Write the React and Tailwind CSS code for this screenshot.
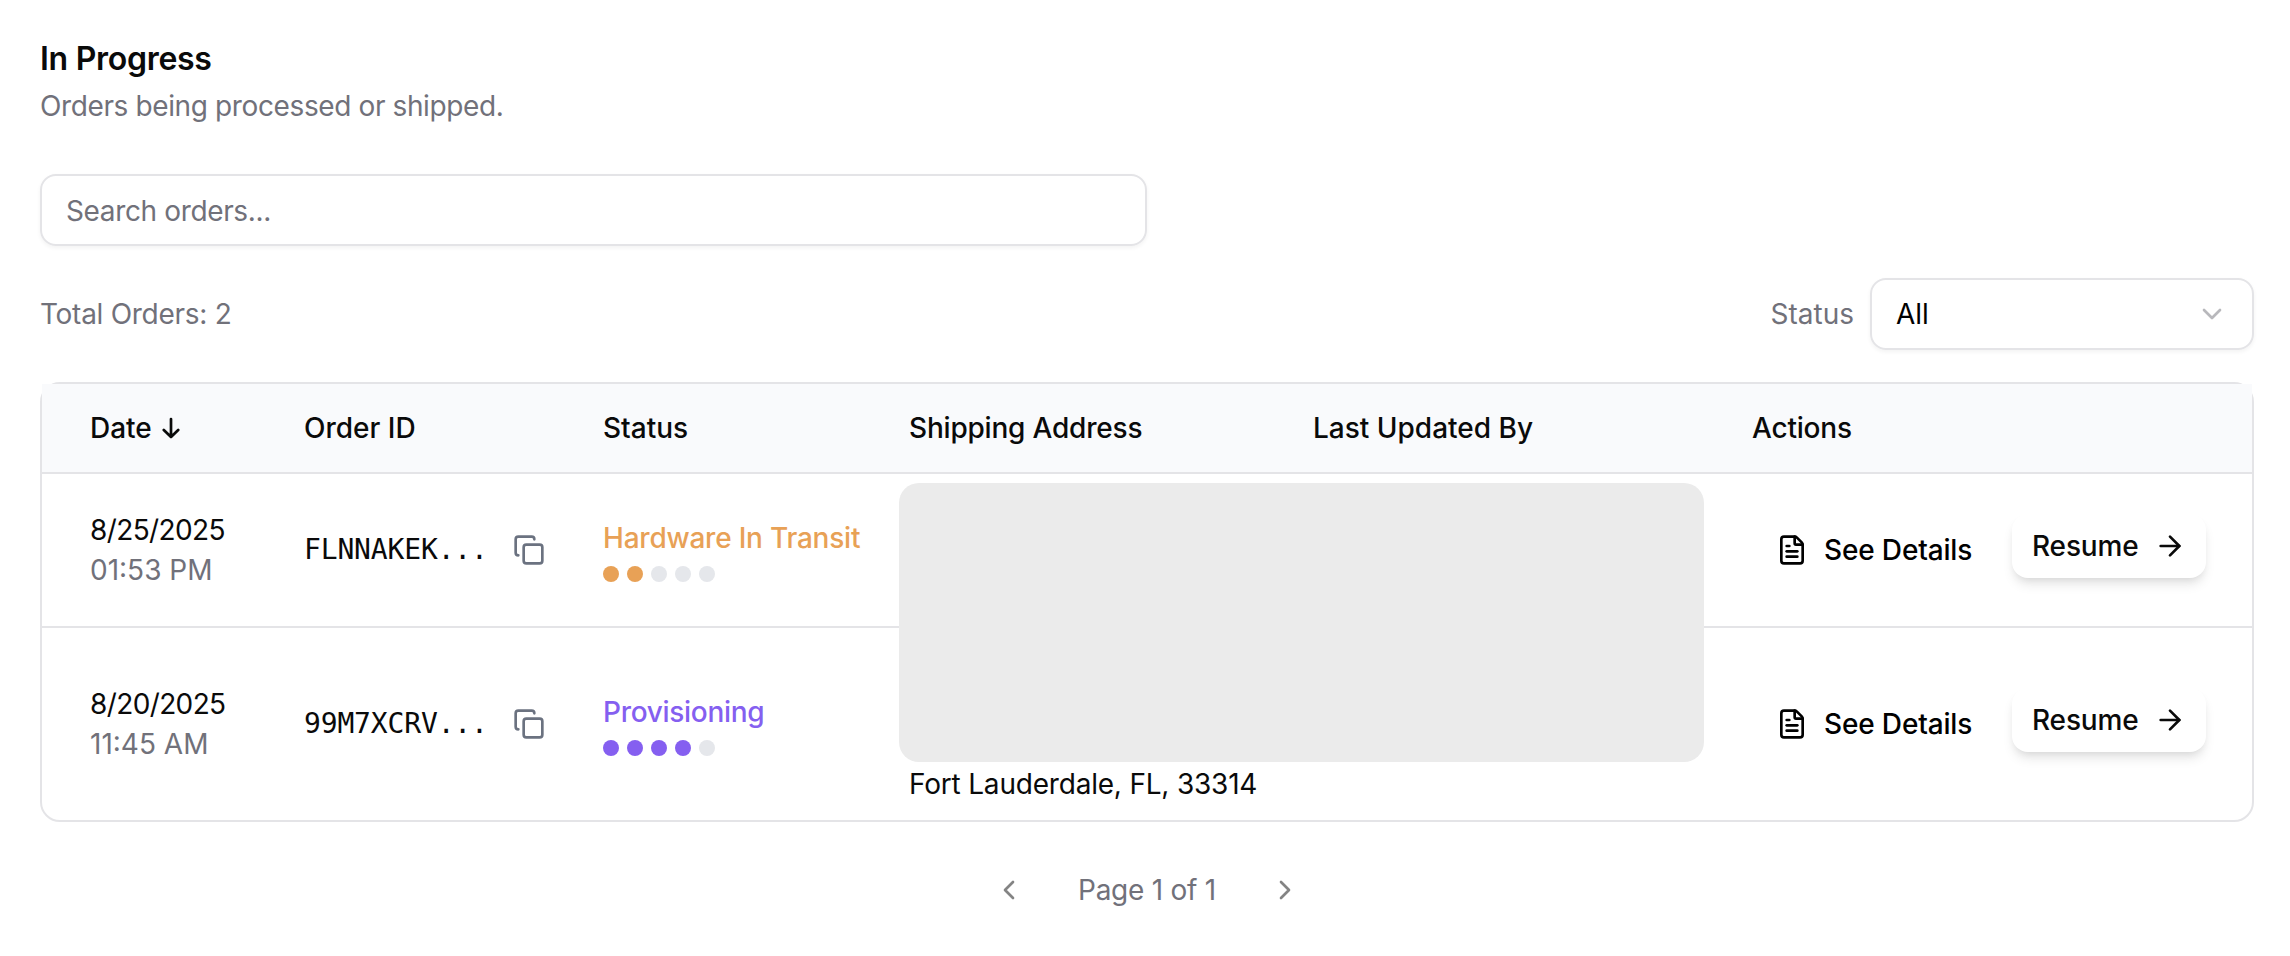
import { ArrowRight, ChevronDown, ChevronLeft, ChevronRight, Copy, FileText } from 'lucide-react';

const orders = [
  {
    date: '8/25/2025',
    time: '01:53 PM',
    id: 'FLNNAKEK...',
    status: 'Hardware In Transit',
    textClass: 'text-[#e8a156] tracking-[-0.22px]',
    dotClass: 'bg-[#e8a156]',
    step: 2,
    rowClass: 'h-[154px] border-b-2',
    city: '',
  },
  {
    date: '8/20/2025',
    time: '11:45 AM',
    id: '99M7XCRV...',
    status: 'Provisioning',
    textClass: 'text-[#855ff0] tracking-[-0.3px]',
    dotClass: 'bg-[#855ff0]',
    step: 4,
    rowClass: 'h-[192px]',
    city: 'Fort Lauderdale, FL, 33314',
  },
];

const columns = 'grid grid-cols-[214px_299px_306px_404px_439px_1fr] pl-12';

function SortArrow() {
  return (
    <svg width="18" height="22" viewBox="0 0 18 22" fill="none" stroke="currentColor" strokeWidth="2.7" strokeLinecap="round" strokeLinejoin="round">
      <path d="M9 2v18M1.8 13l7.2 7 7.2-7" />
    </svg>
  );
}

function OrderRow({ order }) {
  return (
    <div className={`${columns} ${order.rowClass} items-center border-[#e4e4e7]`}>
      <div>
        <div className="tracking-[-0.62px]">{order.date}</div>
        <div className="text-[#71717a]">{order.time}</div>
      </div>
      <div className="flex items-center">
        <span className="w-[209px] font-['DejaVu_Sans_Mono',monospace] tracking-[-0.15px]">{order.id}</span>
        <Copy size={32} className="text-[#6b7280]" />
      </div>
      <div className="flex flex-col gap-2">
        <div className={`font-medium ${order.textClass}`}>{order.status}</div>
        <div className="flex gap-2">
          {[0, 1, 2, 3, 4].map((i) => (
            <span key={i} className={`size-4 rounded-full ${i < order.step ? order.dotClass : 'bg-[#e5e7eb]'}`} />
          ))}
        </div>
      </div>
      <div className="self-end whitespace-nowrap pb-4 tracking-[-0.2px]">{order.city}</div>
      <div />
      <div className="flex items-center pl-6 font-medium tracking-[-0.15px]">
        <button className="flex items-center gap-4 text-black">
          <FileText size={32} />
          <span className="w-[148px] whitespace-nowrap text-left">See Details</span>
        </button>
        <button className="mb-2 ml-10 flex h-16 w-[194px] items-center justify-between rounded-2xl bg-white px-5 shadow-[0_8px_12px_-2px_rgba(0,0,0,0.10),0_4px_8px_-4px_rgba(0,0,0,0.10)]">
          Resume
          <ArrowRight size={32} />
        </button>
      </div>
    </div>
  );
}

export default function App() {
  return (
    <main className="h-[956px] w-[2290px] bg-white px-10 pt-9 font-['Inter',sans-serif] text-[28px] leading-10 text-[#0a0a0a]">
      <h1 className="h-12 text-[32px] font-semibold leading-[46px] tracking-[-0.28px]">In Progress</h1>
      <p className="pt-0.5 tracking-[-0.38px] text-[#71717a]">Orders being processed or shipped.</p>
      <input
        placeholder="Search orders..."
        className="mt-12 block h-[72px] w-[1107px] rounded-2xl border-2 border-[#e4e4e7] px-6 pt-0.5 tracking-[-0.36px] shadow-[0_2px_4px_rgba(0,0,0,0.05)] outline-none placeholder:text-[#71717a]"
      />
      <div className="mt-8 flex h-[72px] w-[2214px] items-center justify-between">
        <span className="tracking-[-0.28px] text-[#71717a]">Total Orders: 2</span>
        <div className="flex items-center">
          <span className="mr-4 text-[#71717a]">Status</span>
          <button className="flex h-[72px] w-[384px] items-center justify-between rounded-2xl border-2 border-[#e4e4e7] px-6 text-black shadow-[0_2px_4px_rgba(0,0,0,0.05)]">
            All
            <ChevronDown size={32} className="text-[#b8b8bc]" />
          </button>
        </div>
      </div>
      <section className="relative mt-8 w-[2214px] rounded-[20px] border-2 border-[#e4e4e7]">
        <div className={`${columns} h-[90px] items-center border-b-2 border-[#e4e4e7] bg-[#f9fafc] font-medium`}>
          <span className="flex items-center gap-2.5">
            Date
            <SortArrow />
          </span>
          <span>Order ID</span>
          <span>Status</span>
          <span className="tracking-[-0.2px]">Shipping Address</span>
          <span>Last Updated By</span>
          <span className="tracking-[-0.2px]">Actions</span>
        </div>
        {orders.map((order) => (
          <OrderRow key={order.id} order={order} />
        ))}
        <div className="absolute left-[857px] top-[99px] h-[279px] w-[805px] rounded-[20px] bg-[#ebebeb]" />
      </section>
      <nav className="mt-12 flex w-[2214px] items-center justify-center gap-[53px] text-[#71717a]">
        <ChevronLeft size={32} className="text-[#848484]" />
        <span className="tracking-[-0.24px]">Page 1 of 1</span>
        <ChevronRight size={32} className="text-[#848484]" />
      </nav>
    </main>
  );
}
